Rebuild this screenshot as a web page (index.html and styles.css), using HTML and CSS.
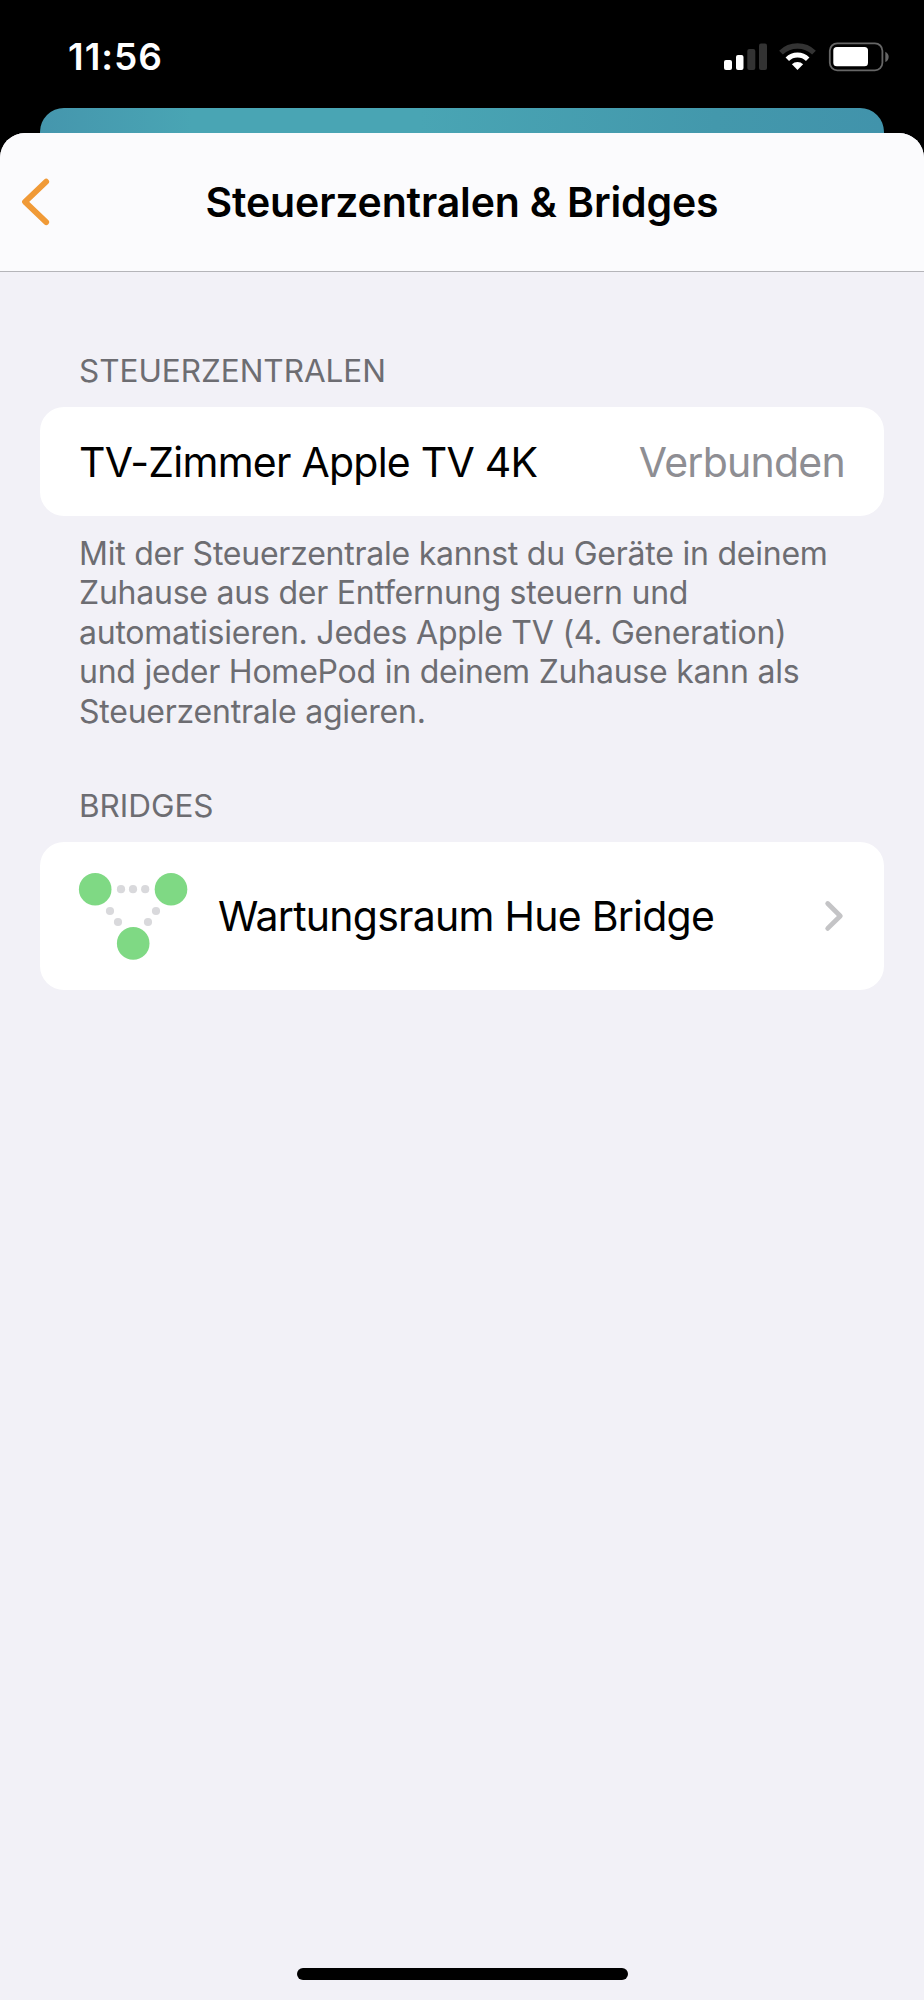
FILE: index.html
```
<!DOCTYPE html>
<html lang="de">
<head>
  <meta charset="UTF-8">
  <title>Steuerzentralen &amp; Bridges</title>
  <link rel="stylesheet" href="styles.css">
</head>
<body>

  <div class="status-bar">
    <span class="time">11:56</span>
    <svg class="status-icons" width="168" height="32" viewBox="722 41 168 32">
      <!-- signal -->
      <rect x="724" y="60" width="8" height="10" rx="2" fill="#fff"/>
      <rect x="736" y="55" width="7.5" height="15" rx="2" fill="#fff"/>
      <rect x="747.3" y="49" width="8" height="21" rx="2" fill="#333"/>
      <rect x="759" y="43.5" width="8" height="26.5" rx="2" fill="#333"/>
      <!-- wifi -->
      <path d="M781 52.6a23.8 23.8 0 0 1 33 0" fill="none" stroke="#333" stroke-width="5.4"/>
      <path d="M787.3 59.2a14.6 14.6 0 0 1 20.4 0" fill="none" stroke="#fff" stroke-width="5"/>
      <path d="M797.5 70l-5.6-5.7a8 8 0 0 1 11.2 0z" fill="#fff"/>
      <!-- battery -->
      <rect x="829.8" y="43.3" width="52.6" height="27" rx="7.5" fill="none" stroke="#666" stroke-width="1.8"/>
      <rect x="833.3" y="47" width="34.7" height="19.3" rx="3.5" fill="#fff"/>
      <path d="M885.3 51.8c4.5 1.8 4.5 8.6 0 10.3z" fill="#666"/>
    </svg>
  </div>

  <div class="behind"></div>

  <div class="sheet">
    <header>
      <svg class="back" width="32" height="52" viewBox="20 176 32 52">
        <path d="M46.2 181.7L25 201.8L46.2 222.2" fill="none" stroke="#f09a37" stroke-width="5.8" stroke-linecap="round" stroke-linejoin="round"/>
      </svg>
      <h1>Steuerzentralen &amp; Bridges</h1>
    </header>

    <main>
      <h2>STEUERZENTRALEN</h2>
      <div class="card hub">
        <span class="name">TV-Zimmer Apple TV 4K</span>
        <span class="state">Verbunden</span>
      </div>
      <p class="note">
        Mit der Steuerzentrale kannst du Geräte in deinem<br>
        Zuhause aus der Entfernung steuern und<br>
        automatisieren. Jedes Apple TV (4. Generation)<br>
        und jeder HomePod in deinem Zuhause kann als<br>
        Steuerzentrale agieren.
      </p>

      <h2>BRIDGES</h2>
      <div class="card bridge">
        <svg class="bridge-icon" width="110" height="90" viewBox="78 871 110 90">
          <g fill="#7fd984">
            <circle cx="95.2" cy="889.2" r="16.3"/>
            <circle cx="171" cy="889.2" r="16.3"/>
            <circle cx="133.2" cy="943.4" r="16.3"/>
          </g>
          <g fill="#d9d9dc">
            <circle cx="121" cy="889.2" r="4.1"/>
            <circle cx="133" cy="889.2" r="4.1"/>
            <circle cx="145.2" cy="889.2" r="4.1"/>
            <circle cx="110" cy="911" r="4.1"/>
            <circle cx="118" cy="922" r="4.1"/>
            <circle cx="156" cy="911" r="4.1"/>
            <circle cx="148" cy="922" r="4.1"/>
          </g>
        </svg>
        <span class="name">Wartungsraum Hue Bridge</span>
        <svg class="chevron" width="22" height="34" viewBox="823 898.5 22 34">
          <path d="M827.7 903L840.3 915.5L827.7 927.9" fill="none" stroke="#c4c4c6" stroke-width="4.8" stroke-linecap="round" stroke-linejoin="round"/>
        </svg>
      </div>
    </main>

    <div class="home-indicator"></div>
  </div>

</body>
</html>
```

FILE: styles.css
```
* {
  box-sizing: border-box;
}

body {
  margin: 0;
  height: 2000px;
  background: #000;
  font-family: Inter, "Liberation Sans", sans-serif;
  color: #000;
  display: flex;
  flex-direction: column;
  overflow: hidden;
}

.status-bar {
  height: 108px;
  padding: 0 34px 0 68px;
  display: flex;
  justify-content: space-between;
  color: #fff;
}

.time {
  margin-top: 35px;
  font-size: 37px;
  line-height: 44px;
  font-weight: 600;
  letter-spacing: 1px;
}

.status-icons {
  margin-top: 41px;
}

.behind {
  height: 25px;
  margin: 0 40px;
  border-radius: 24px 24px 0 0;
  background: linear-gradient(90deg, #4596ad, #49a5b4 18%, #49a5b4 45%, #4398ac 80%, #4193ab);
}

.sheet {
  flex: 1;
  background: #f2f1f7;
  border-radius: 25px 25px 0 0;
  overflow: hidden;
  display: flex;
  flex-direction: column;
}

header {
  height: 139px;
  background: #fbfbfd;
  border-bottom: 1px solid #b5b5b9;
  display: flex;
  padding: 43px 52px 0 20px;
}

h1 {
  flex: 1;
  margin: 1px 0 0;
  text-align: center;
  font-size: 41px;
  line-height: 50px;
  font-weight: 600;
  letter-spacing: -0.15px;
}

main {
  padding: 79px 40px 0;
}

h2 {
  margin: 0 0 17px 39px;
  font-size: 31.5px;
  line-height: 39px;
  font-weight: 400;
  letter-spacing: -0.03px;
  color: #6d6d72;
}

.card {
  background: #fff;
  border-radius: 24px;
  display: flex;
  align-items: center;
  font-size: 41px;
  line-height: 50px;
  letter-spacing: -0.75px;
}

.hub {
  height: 109px;
  padding: 0 39px;
  justify-content: space-between;
}

.state {
  color: #8e8e93;
}

.note {
  margin: 18px 0 55px 39px;
  font-size: 32px;
  line-height: 39.4px;
  letter-spacing: -0.23px;
  color: #6d6d72;
  white-space: nowrap;
}

.bridge {
  height: 148px;
  padding: 0 39px 0 38px;
}

.bridge .name {
  flex: 1;
  margin-left: 30px;
}

.home-indicator {
  width: 331px;
  height: 12px;
  margin: auto auto 20px;
  border-radius: 6px;
  background: #000;
}
```
